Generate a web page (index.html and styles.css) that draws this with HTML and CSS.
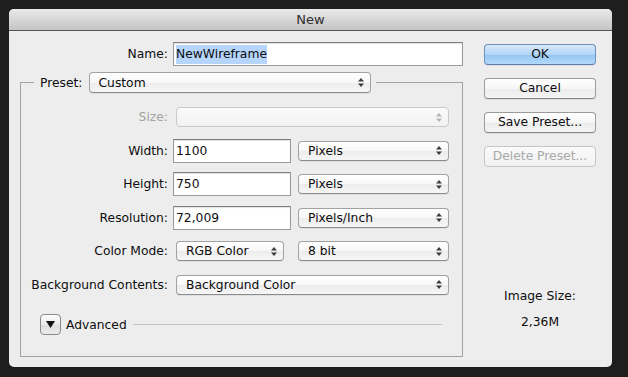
FILE: index.html
```html
<!DOCTYPE html>
<html>
<head>
<meta charset="utf-8">
<title>New</title>
<link rel="stylesheet" href="styles.css">
</head>
<body>
<div class="dialog">
  <div class="titlebar">New</div>
  <div class="content">
    <div class="form">
      <div class="name-row">
        <span class="lbl">Name:</span>
        <div class="textfield name-field"><span class="sel">NewWireframe</span></div>
      </div>
      <fieldset class="group">
        <legend class="legend">
          <span class="legend-inner">
            <span class="legend-lbl">Preset:</span>
            <span class="popup preset-popup"><span class="popup-text">Custom</span><svg class="arrows" width="6" height="9" viewBox="0 0 6 9"><polygon points="0,3.5 3,0 6,3.5"/><polygon points="0,5.5 6,5.5 3,9"/></svg></span>
          </span>
        </legend>
        <div class="rows">
          <div class="row">
            <span class="lbl dim">Size:</span>
            <span class="popup popup-long disabled"><span class="popup-text"></span><svg class="arrows" width="6" height="9" viewBox="0 0 6 9"><polygon points="0,3.5 3,0 6,3.5"/><polygon points="0,5.5 6,5.5 3,9"/></svg></span>
          </div>
          <div class="row">
            <span class="lbl">Width:</span>
            <div class="textfield num-field">1100</div>
            <span class="popup popup-unit"><span class="popup-text">Pixels</span><svg class="arrows" width="6" height="9" viewBox="0 0 6 9"><polygon points="0,3.5 3,0 6,3.5"/><polygon points="0,5.5 6,5.5 3,9"/></svg></span>
          </div>
          <div class="row">
            <span class="lbl">Height:</span>
            <div class="textfield num-field">750</div>
            <span class="popup popup-unit"><span class="popup-text">Pixels</span><svg class="arrows" width="6" height="9" viewBox="0 0 6 9"><polygon points="0,3.5 3,0 6,3.5"/><polygon points="0,5.5 6,5.5 3,9"/></svg></span>
          </div>
          <div class="row">
            <span class="lbl">Resolution:</span>
            <div class="textfield num-field">72,009</div>
            <span class="popup popup-unit"><span class="popup-text">Pixels/Inch</span><svg class="arrows" width="6" height="9" viewBox="0 0 6 9"><polygon points="0,3.5 3,0 6,3.5"/><polygon points="0,5.5 6,5.5 3,9"/></svg></span>
          </div>
          <div class="row">
            <span class="lbl">Color Mode:</span>
            <span class="popup popup-mode"><span class="popup-text">RGB Color</span><svg class="arrows" width="6" height="9" viewBox="0 0 6 9"><polygon points="0,3.5 3,0 6,3.5"/><polygon points="0,5.5 6,5.5 3,9"/></svg></span>
            <span class="popup popup-bits"><span class="popup-text">8 bit</span><svg class="arrows" width="6" height="9" viewBox="0 0 6 9"><polygon points="0,3.5 3,0 6,3.5"/><polygon points="0,5.5 6,5.5 3,9"/></svg></span>
          </div>
          <div class="row">
            <span class="lbl">Background Contents:</span>
            <span class="popup popup-long"><span class="popup-text">Background Color</span><svg class="arrows" width="6" height="9" viewBox="0 0 6 9"><polygon points="0,3.5 3,0 6,3.5"/><polygon points="0,5.5 6,5.5 3,9"/></svg></span>
          </div>
        </div>
        <div class="advanced">
          <span class="disclosure"><svg width="9" height="7" viewBox="0 0 9 7"><polygon points="0,0 9,0 4.5,7"/></svg></span>
          <span class="adv-text">Advanced</span>
          <span class="adv-line"></span>
        </div>
      </fieldset>
    </div>
    <div class="side">
      <div class="btn btn-default">OK</div>
      <div class="btn">Cancel</div>
      <div class="btn">Save Preset...</div>
      <div class="btn disabled">Delete Preset...</div>
      <div class="info">
        <div class="info-lbl">Image Size:</div>
        <div class="info-val">2,36M</div>
      </div>
    </div>
  </div>
</div>
</body>
</html>
```

FILE: styles.css
```css
* { box-sizing: border-box; }

html, body {
  margin: 0;
  padding: 0;
  background: #1e1e1e;
  width: 628px;
  height: 377px;
  overflow: hidden;
}

body {
  padding: 9px 0 0 9px;
  font-family: "DejaVu Sans", "Liberation Sans", sans-serif;
  font-size: 12.3px;
  color: #0d0d0d;
}

.dialog {
  width: 603px;
  height: 358px;
  background: #ededed;
  border-radius: 5px;
  overflow: hidden;
  display: flex;
  flex-direction: column;
}

.titlebar {
  height: 22px;
  flex: none;
  background: linear-gradient(#ebebeb, #d6d6d6 50%, #c5c5c5);
  border-bottom: 1px solid #555;
  text-align: center;
  font-size: 13px;
  line-height: 21px;
  color: #2e2e2e;
}

.content {
  display: flex;
  padding-left: 11px;
  flex: 1;
}

.form {
  width: 443px;
  flex: none;
}

.name-row {
  display: flex;
  align-items: center;
  margin-top: 11px;
  height: 24px;
}

.lbl {
  width: 148px;
  text-align: right;
  margin-right: 5px;
  white-space: nowrap;
  flex: none;
}

.rows .lbl { width: 147px; }

.dim { color: #a3a3a3; }

.textfield {
  height: 24px;
  background: #fff;
  border: 1px solid #9a9a9a;
  border-top-color: #7e7e7e;
  box-shadow: inset 0 1px 1px rgba(0,0,0,0.12);
  padding-left: 2px;
  line-height: 22px;
  white-space: nowrap;
  flex: none;
}

.name-field { width: 290px; }
.num-field { width: 118px; }

.sel {
  background: #b5d5fc;
  padding: 2px 0 3px;
}

.group {
  margin: 6px 0 0;
  padding: 0 0 21px;
  border: 1px solid #a3a3a3;
  width: 443px;
  min-inline-size: 0;
}

.legend {
  margin-left: 13px;
  padding: 0 5px 0 6px;
}

.legend-inner {
  display: flex;
  align-items: center;
}

.legend-lbl { margin-right: 6px; }

.popup {
  display: flex;
  align-items: center;
  height: 20px;
  border: 1px solid #a2a2a2;
  border-bottom-color: #8c8c8c;
  border-radius: 4px;
  background: linear-gradient(#ffffff, #f7f7f7 50%, #ececec 51%, #f6f6f6);
  box-shadow: 0 1px 0 rgba(0,0,0,0.06);
  padding: 0 6px 0 9px;
  flex: none;
  white-space: nowrap;
}

.popup-text { flex: 1; }

.arrows { fill: #3c3c3c; flex: none; }

.popup.disabled {
  border-color: #c9c9c9;
  background: linear-gradient(#fbfbfb, #f2f2f2);
  box-shadow: none;
}
.popup.disabled .arrows { fill: #b5b5b5; }

.preset-popup { width: 282px; height: 21px; }

.rows {
  display: grid;
  grid-auto-rows: 26px;
  row-gap: 7.5px;
  padding-top: 11px;
}

.row {
  display: flex;
  align-items: center;
}

.popup-long { width: 273px; margin-left: 3px; }
.popup-unit { width: 151px; margin-left: 7px; }
.popup-mode { width: 108px; margin-left: 3px; }
.popup-bits { width: 151px; margin-left: 14px; }

.advanced {
  display: flex;
  align-items: center;
  margin-top: 16.5px;
  padding-left: 19px;
  padding-right: 20px;
  height: 21px;
}

.disclosure {
  width: 21px;
  height: 21px;
  border: 1px solid #8a8a8a;
  border-radius: 4px;
  background: linear-gradient(#fdfdfd, #e9e9e9 50%, #dcdcdc 51%, #ececec);
  display: flex;
  align-items: center;
  justify-content: center;
  flex: none;
}
.disclosure svg { fill: #111; }

.adv-text { margin-left: 5px; }

.adv-line {
  flex: 1;
  margin-left: 6px;
  border-top: 1px solid #c4c4c4;
}

.side {
  width: 112px;
  margin-left: 21px;
  padding-top: 13px;
  display: flex;
  flex-direction: column;
  gap: 13px;
}

.btn {
  height: 21px;
  border: 1px solid #9b9b9b;
  border-bottom-color: #858585;
  border-radius: 4px;
  background: linear-gradient(#ffffff, #f6f6f6 50%, #ebebeb 51%, #f5f5f5);
  box-shadow: 0 1px 0 rgba(0,0,0,0.06);
  text-align: center;
  line-height: 19px;
  white-space: nowrap;
}

.btn-default {
  border-color: #6f8fbc;
  border-bottom-color: #5d7ca8;
  background: linear-gradient(#d6e8fb, #b2d5f7 50%, #96c5f2 51%, #b3d9fa);
}

.btn.disabled {
  color: #a9a9a9;
  border-color: #c6c6c6;
  background: linear-gradient(#fafafa, #f1f1f1);
  box-shadow: none;
}

.info {
  margin-top: 108px;
  text-align: center;
}

.info-lbl { line-height: 16px; }
.info-val { line-height: 16px; margin-top: 10px; }
```
